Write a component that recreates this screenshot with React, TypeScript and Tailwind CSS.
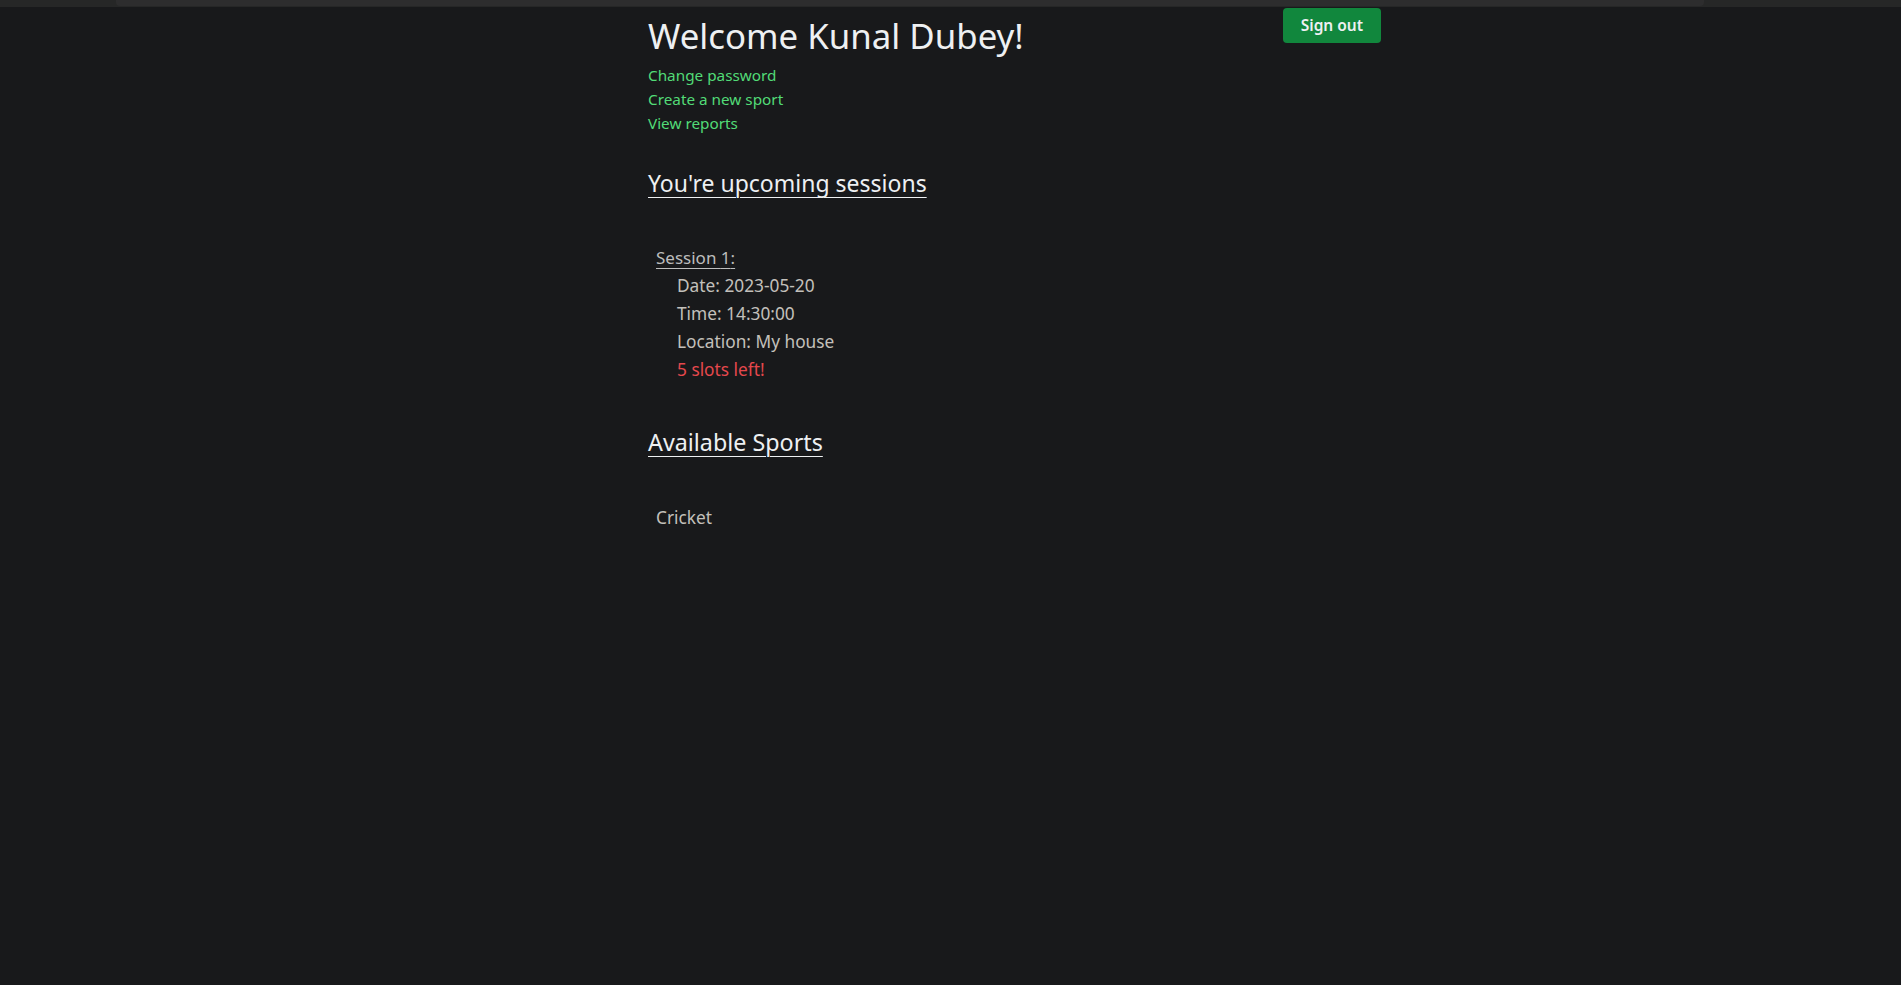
import React from 'react';

const sessions = [
  { id: 1, date: '2023-05-20', time: '14:30:00', location: 'My house', slots: 5 },
];

const sports = ['Cricket'];

export default function App() {
  return (
    <div className="min-h-screen bg-[#18191b] text-[#ececec]" style={{ fontFamily: '"Noto Sans", "Open Sans", sans-serif' }}>
      <div className="h-[7px] bg-[#262727]">
        <div className="ml-[116px] w-[1588px] h-[6px] rounded-b-sm bg-[#2d2d2e]" />
      </div>

      <div className="pl-[648px]">
        <div className="w-[733px] flex justify-between items-start">
          <div>
            <h1 className="mt-[7px] text-[34.8px] leading-[44px] font-normal text-[#eef0f2]">Welcome Kunal Dubey!</h1>
            <div className="mt-[5px] flex flex-col text-[15.3px] leading-[24px] text-[#52db77]">
              <a href="#">Change password</a>
              <a href="#">Create a new sport</a>
              <a href="#">View reports</a>
            </div>
          </div>
          <button className="mt-px h-[35px] px-[18px] rounded bg-[#11873d] text-[15.5px] font-semibold text-[#eef0f2]">
            Sign out
          </button>
        </div>

        <h2 className="mt-[32px] text-[23px] leading-[32px] underline underline-offset-[5px] decoration-1 text-[#eef0f2]">
          You're upcoming sessions
        </h2>

        <div className="mt-[47px] pl-2">
          {sessions.map((s) => (
            <div key={s.id}>
              <p className="text-[17px] leading-[24px] underline underline-offset-[4px] decoration-1 text-[#bdbdbd]">Session {s.id}:</p>
              <div className="mt-[2px] pl-[21px] text-[17.3px] leading-[28px] text-[#c3c0bb]">
                <p>Date: {s.date}</p>
                <p>Time: {s.time}</p>
                <p>Location: {s.location}</p>
                <p className="text-[#e5484d]">{s.slots} slots left!</p>
              </div>
            </div>
          ))}
        </div>

        <h2 className="mt-[42px] text-[23.3px] leading-[32px] underline underline-offset-[5px] decoration-1 text-[#eef0f2]">
          Available Sports
        </h2>

        <div className="mt-[46px] pl-2 text-[17.3px] leading-[28px] text-[#c3c0bb]">
          {sports.map((sp) => (
            <p key={sp}>{sp}</p>
          ))}
        </div>
      </div>
    </div>
  );
}
